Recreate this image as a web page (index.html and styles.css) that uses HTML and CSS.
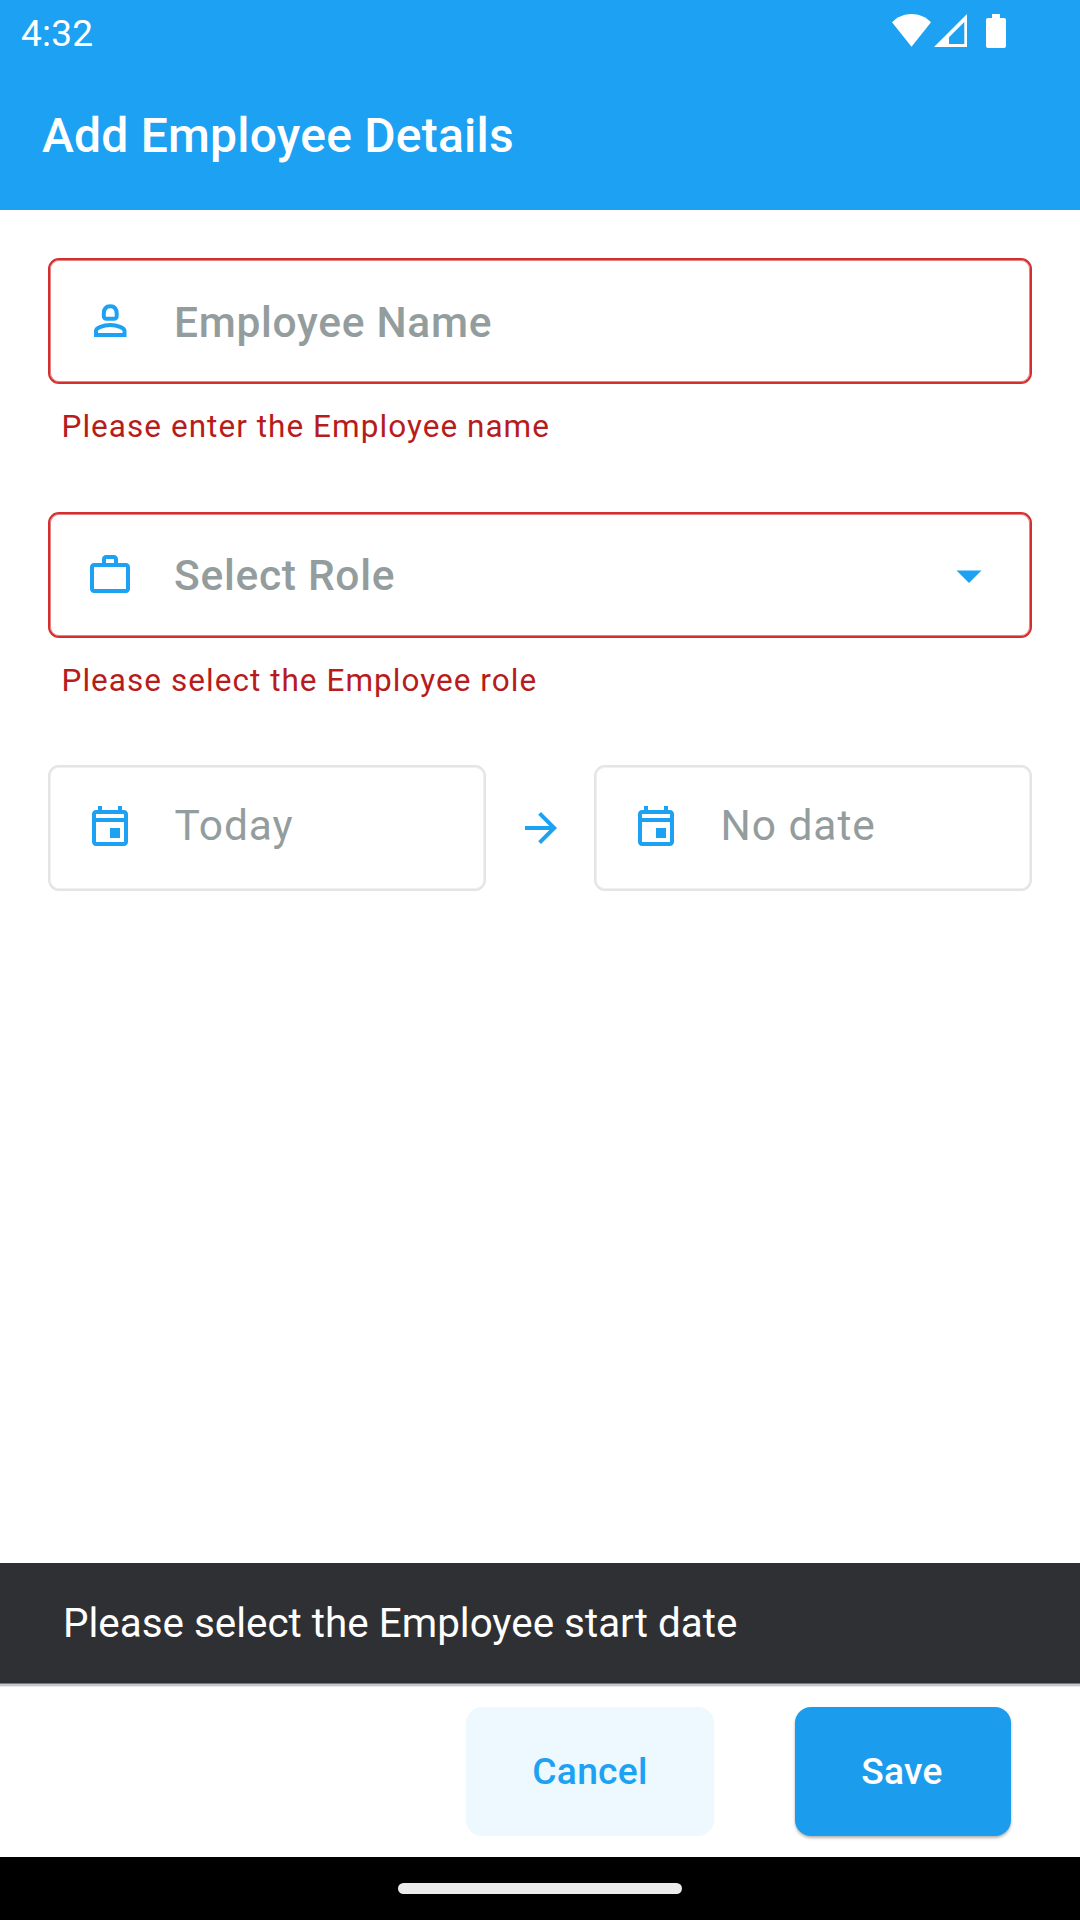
FILE: index.html
```html
<!DOCTYPE html>
<html lang="en">
<head>
<meta charset="utf-8">
<title>Add Employee Details</title>
<link rel="stylesheet" href="styles.css">
</head>
<body>
<div class="screen">
  <header class="header">
    <div class="status">
      <span class="clock">4:32</span>
      <svg class="status-icons" width="116" height="36" viewBox="0 0 116 36" fill="#fff">
        <path d="M0 9.3C5 4 12 1 19.5 1S34 4 39 9.3L19.5 33.7z"/>
        <path fill-rule="evenodd" d="M42 34L75 1v33zM57 31h15.3V9L57 24.3z"/>
        <path d="M100 1h8v4h4a2 2 0 0 1 2 2v26a2 2 0 0 1-2 2H96a2 2 0 0 1-2-2V7a2 2 0 0 1 2-2h4z"/>
      </svg>
    </div>
    <h1 class="title">Add Employee Details</h1>
  </header>

  <main class="form">
    <div class="field field-error field-name">
      <svg class="icon" width="48" height="48" viewBox="0 0 48 48" fill="none" stroke="#1da1f2" stroke-width="4">
        <path d="M17.800 14.800c0-5.200 2.700-7.500 6.450-7.500s6.450 2.300 6.450 7.500c.3 4-.7 4.900-2.300 4.900h-8.300c-1.600 0-2.600-.9-2.300-4.900z"/>
        <path d="M10 36v-4.200c0-3 7-5.800 14.250-5.800s14.250 2.800 14.250 5.800v4.200z"/>
      </svg>
      <span class="label">Employee Name</span>
    </div>
    <p class="error">Please enter the Employee name</p>

    <div class="field field-error field-role">
      <svg class="icon" width="48" height="48" viewBox="0 0 24 24" fill="#1da1f2">
        <path d="M14 6V4h-4v2h4zM4 8v11h16V8H4zm16-2c1.110 0 2 .89 2 2v11c0 1.110-.89 2-2 2H4c-1.110 0-2-.89-2-2V8c0-1.110.89-2 2-2h4V4c0-1.110.89-2 2-2h4c1.110 0 2 .89 2 2v2h4z"/>
      </svg>
      <span class="label">Select Role</span>
      <svg class="caret" width="26" height="13" viewBox="0 0 26 13" fill="#1da1f2"><path d="M.5.4h25L13 12.900z"/></svg>
    </div>
    <p class="error">Please select the Employee role</p>

    <div class="dates">
      <div class="field field-date">
        <svg class="icon" width="48" height="48" viewBox="0 0 24 24" fill="#1da1f2">
          <path d="M19 4h-1V2h-2v2H8V2H6v2H5c-1.110 0-2 .9-2 2v14c0 1.100.89 2 2 2h14c1.100 0 2-.9 2-2V6c0-1.100-.9-2-2-2zm0 16H5V10h14v10zm0-12H5V6h14v2zm-7 5h5v5h-5z"/>
        </svg>
        <span class="label">Today</span>
      </div>
      <svg class="arrow" width="48" height="48" viewBox="0 0 24 24" fill="#1da1f2"><path d="M12 4l-1.410 1.410L16.170 11H4v2h12.170l-5.580 5.590L12 20l8-8z"/></svg>
      <div class="field field-date">
        <svg class="icon" width="48" height="48" viewBox="0 0 24 24" fill="#1da1f2">
          <path d="M19 4h-1V2h-2v2H8V2H6v2H5c-1.110 0-2 .9-2 2v14c0 1.100.89 2 2 2h14c1.100 0 2-.9 2-2V6c0-1.100-.9-2-2-2zm0 16H5V10h14v10zm0-12H5V6h14v2zm-7 5h5v5h-5z"/>
        </svg>
        <span class="label">No date</span>
      </div>
    </div>
  </main>

  <div class="snackbar">Please select the Employee start date</div>
  <footer class="actions">
    <button class="btn btn-cancel">Cancel</button>
    <button class="btn btn-save">Save</button>
  </footer>
  <div class="navbar"><div class="pill"></div></div>
</div>
</body>
</html>
```
FILE: styles.css
```css
* { box-sizing: border-box; }
body { margin: 0; background: #fff; font-family: Roboto, sans-serif; }
.screen { width: 1080px; height: 1920px; display: flex; flex-direction: column; overflow: hidden; }

.header { height: 210px; flex: none; background: #1da1f2; color: #fff; }
.status { height: 66px; display: flex; justify-content: space-between; align-items: flex-start; padding: 13px 72px 0 21px; }
.clock { padding-top: 1px; font-size: 37px; line-height: 40px; letter-spacing: .2px; }
.status-icons { display: block; }
.title { margin: 0; padding: 40px 0 0 42px; font-size: 48px; line-height: 60px; font-weight: 500; letter-spacing: .22px; white-space: nowrap; }

.form { flex: 1; padding: 48px 48px 0; }
.field {
  height: 126px; display: flex; align-items: flex-start; padding-left: 38px;
  border: 2px solid #e4e4e4; border-radius: 11px; box-shadow: inset 0 0 0 1px #f0f0f0;
}
.field-error { border-color: #d32f2f; box-shadow: inset 0 0 0 1px #e58282; }
.icon { display: block; flex: none; margin-left: -2px; }
.label { margin-left: 40px; font-size: 42.5px; line-height: 50px; letter-spacing: .7px; color: #949d9e; white-space: nowrap; }
.field-name .icon { margin-top: 39px; }
.field-name .label { margin-top: 38px; font-weight: 500; }
.field-role .icon { margin-top: 37px; }
.field-role .label { margin-top: 37px; font-weight: 500; }
.caret { margin: 56px 48.5px 0 auto; }
.error {
  margin: 0; height: 128px; padding: 23px 0 0 13.5px; font-size: 31.5px; line-height: 40px;
  letter-spacing: 1.04px; color: #b71c1c; white-space: nowrap;
}
.dates { display: grid; grid-template-columns: 438px 108px 438px; margin-top: -1px; }
.field-date .icon { margin-top: 35px; }
.field-date .label { margin-top: 34px; letter-spacing: .95px; margin-left: 40.5px; }
.arrow { display: block; margin: 39px 0 0 30.5px; }

.snackbar {
  height: 120px; flex: none; padding: 36px 0 0 63px; background: #2f3034; color: #fff;
  font-size: 40.4px; line-height: 50px; white-space: nowrap;
  box-shadow: 0 1px 0 #777980, 0 3px 0 #c5c7d0, 0 4px 0 #e8e9ee;
}
.actions { height: 174px; flex: none; display: flex; justify-content: flex-end; padding: 24px 69px 0 0; gap: 81px; }
.btn {
  height: 129px; border: 0; border-radius: 16px; padding: 0;
  font: 500 37.2px/129px Roboto, sans-serif; letter-spacing: .25px;
}
.btn-cancel { width: 248px; background: #edf8ff; color: #1da1f2; }
.btn-save { width: 216px; padding-right: 2px; background: #1c9cec; color: #fff; box-shadow: 0 2px 3px rgba(0,0,0,.3); }
.navbar { height: 63px; flex: none; display: flex; justify-content: center; padding-top: 26px; background: #000; }
.pill { width: 284px; height: 11px; border-radius: 6px; background: #ebebeb; }
```
